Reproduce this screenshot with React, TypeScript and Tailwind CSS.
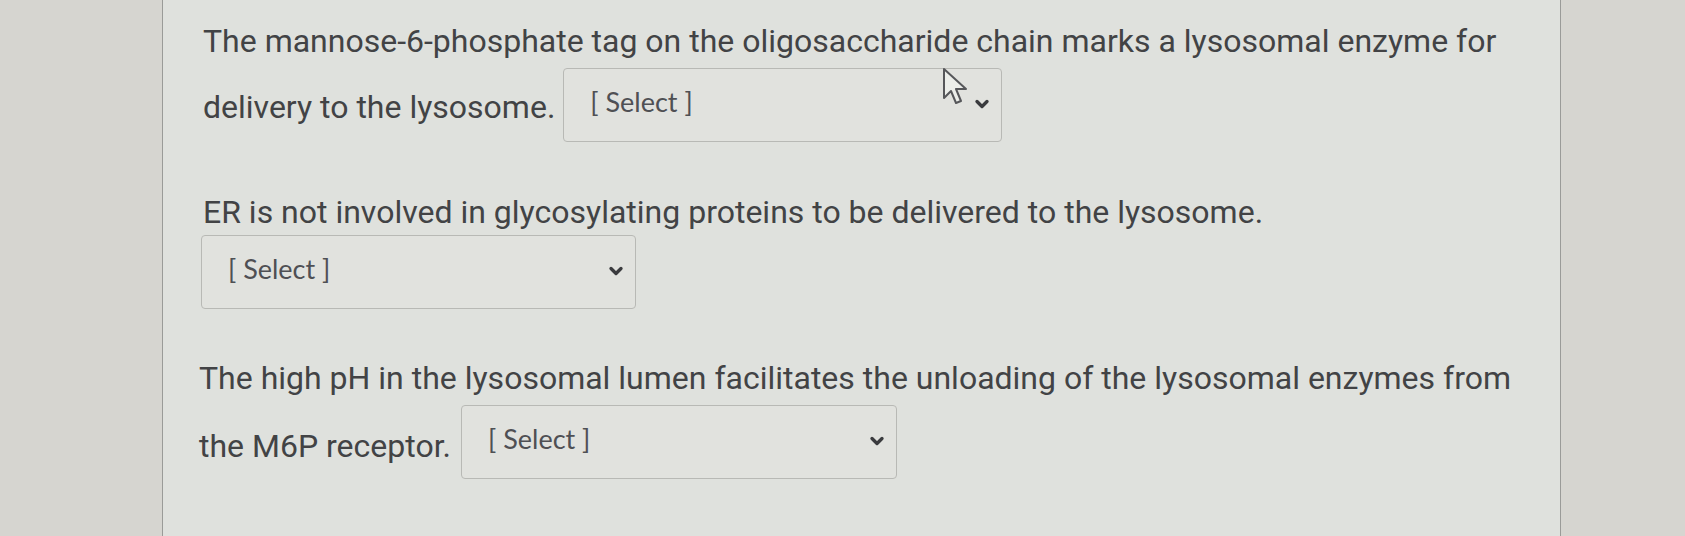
import { ChevronDown } from "lucide-react";

function Select({ width, cursor }: { width: string; cursor?: boolean }) {
  return (
    <div
      className={`relative flex h-[74px] ${width} shrink-0 items-center justify-between rounded-[4px] border border-[#b8b9b5] bg-[#e1e2de] pl-[26px] pr-[9px]`}
    >
      <span className="-mt-[5px] font-['Lato',sans-serif] text-[27px] text-[#4f5054]">[ Select ]</span>
      <ChevronDown className="h-[20px] w-[20px] -mt-[2px] text-[#3a3b3e]" strokeWidth={4} />
      {cursor && (
        <svg
          className="absolute left-[378px] top-[-2px]"
          width="30"
          height="40"
          viewBox="0 0 30 40"
        >
          <path
            d="M2 2 L2 31 L9 24 L14 36 L19 34 L14 22 L24 22 Z"
            fill="#eceeea"
            stroke="#56575a"
            strokeWidth="2"
            strokeLinejoin="round"
          />
        </svg>
      )}
    </div>
  );
}

export default function App() {
  return (
    <div className="flex h-[536px] w-[1685px] bg-[#d6d5d0] font-['Roboto',sans-serif] text-[#424345]">
      <div className="w-[163px] shrink-0 border-r border-[#9a9b98]" />
      <div className="w-[1398px] shrink-0 border-r border-[#9a9b98] bg-[#dfe1dd] pl-[40px] pt-[21px] text-[32px]">
        <p className="leading-[40px]">
          The mannose-6-phosphate tag on the oligosaccharide chain marks a lysosomal enzyme for
        </p>
        <div className="mt-[7px] flex items-center gap-[8px]">
          <span className="mt-[4px] leading-[40px]">delivery to the lysosome.</span>
          <Select width="w-[439px]" cursor />
        </div>

        <p className="mt-[50px] leading-[40px]">
          ER is not involved in glycosylating proteins to be delivered to the lysosome.
        </p>
        <div className="-ml-[2px] mt-[3px]">
          <Select width="w-[435px]" />
        </div>

        <p className="-ml-[4px] mt-[49px] leading-[40px]">
          The high pH in the lysosomal lumen facilitates the unloading of the lysosomal enzymes from
        </p>
        <div className="-ml-[4px] mt-[7px] flex items-center gap-[10px]">
          <span className="mt-[8px] leading-[40px]">the M6P receptor.</span>
          <Select width="w-[436px]" />
        </div>
      </div>
      <div className="flex-1" />
    </div>
  );
}
